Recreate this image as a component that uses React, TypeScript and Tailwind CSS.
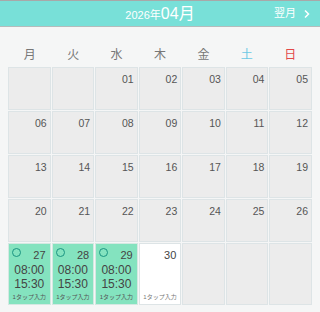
import React from "react";

const font = { fontFamily: '"Liberation Sans", "Noto Sans CJK JP", sans-serif' };

const rows: (string | null)[][] = [
  [null, null, "01", "02", "03", "04", "05"],
  ["06", "07", "08", "09", "10", "11", "12"],
  ["13", "14", "15", "16", "17", "18", "19"],
  ["20", "21", "22", "23", "24", "25", "26"],
];

function PlainCell({ d }: { d: string | null }) {
  return (
    <div className="h-[43px] bg-[#ececec] border border-[#dde4e6] flex justify-end pr-[3px] pt-[4px]">
      {d && <span className="text-[10.5px] leading-[14px] text-[#555]">{d}</span>}
    </div>
  );
}

function GreenCell({ d }: { d: string }) {
  return (
    <div className="h-[62px] bg-[#84e3bf] border border-[#d4e8e2] flex flex-col relative">
      <div className="absolute left-[3px] top-[4px] w-[9px] h-[9px] rounded-full border-[1.5px] border-[#1a9481]" />
      <div className="flex justify-end pr-[4px] pt-[4px]">
        <span className="text-[11px] leading-[14px] text-[#444]">{d}</span>
      </div>
      <div className="mt-[1px] text-center text-[12px] leading-[14px] text-[#444]">08:00</div>
      <div className="text-center text-[12px] leading-[14px] text-[#444]">15:30</div>
      <div className="mt-auto pb-[3px] text-center text-[6px] leading-[8px] text-[#555]">1タップ入力</div>
    </div>
  );
}

export default function App() {
  const week = ["月", "火", "水", "木", "金", "土", "日"];
  const wcol = ["text-[#777]", "text-[#777]", "text-[#777]", "text-[#777]", "text-[#777]", "text-[#6cc8e4]", "text-[#e34848]"];
  return (
    <div className="w-[320px] h-[312px] bg-[#f5f6f6] overflow-hidden" style={font}>
      <div className="border-t border-[#a8a8a8] border-b border-b-[#b4bcbc] bg-[#78e0d8] h-[27px] grid grid-cols-[1fr_auto_1fr] items-center">
        <div />
        <div className="flex items-baseline text-white">
          <span className="text-[11px]">2026年</span>
          <span className="text-[16px]">04月</span>
        </div>
        <div className="flex justify-end items-center pr-[9px] text-white text-[11px]">
          <span>翌月</span>
          <svg width="8" height="10" viewBox="0 0 8 10" className="ml-[7px]">
            <path d="M2 1.5 L5.5 5 L2 8.5" stroke="white" strokeWidth="1.5" fill="none" />
          </svg>
        </div>
      </div>
      <div className="grid grid-cols-7 px-2 h-[40px] items-end pb-[5px]">
        {week.map((w, i) => (
          <div key={w} className={"text-center text-[12px] leading-[14px] " + wcol[i]}>{w}</div>
        ))}
      </div>
      <div className="grid grid-cols-7 gap-[1px] px-2">
        {rows.flat().map((d, i) => (
          <PlainCell key={i} d={d} />
        ))}
        <GreenCell d="27" />
        <GreenCell d="28" />
        <GreenCell d="29" />
        <div className="h-[62px] bg-white border border-[#dde4e6] flex flex-col">
          <div className="flex justify-end pr-[4px] pt-[4px]">
            <span className="text-[11px] leading-[14px] text-[#444]">30</span>
          </div>
          <div className="mt-auto pb-[3px] text-center text-[6px] leading-[8px] text-[#777]">1タップ入力</div>
        </div>
        <div className="h-[62px] bg-[#ececec] border border-[#dde4e6]" />
        <div className="h-[62px] bg-[#ececec] border border-[#dde4e6]" />
        <div className="h-[62px] bg-[#ececec] border border-[#dde4e6]" />
      </div>
    </div>
  );
}
